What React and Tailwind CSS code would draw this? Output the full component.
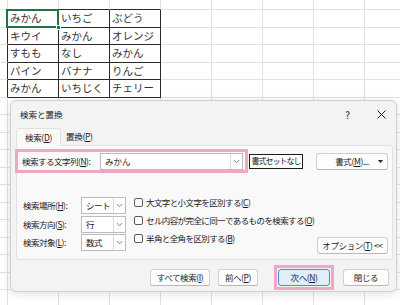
import React from "react";

const font = { fontFamily: '"Noto Sans CJK JP", "Noto Sans", sans-serif' };

const data = [
  ["みかん", "いちご", "ぶどう"],
  ["キウイ", "みかん", "オレンジ"],
  ["すもも", "なし", "みかん"],
  ["パイン", "バナナ", "りんご"],
  ["みかん", "いちじく", "チェリー"],
];

// background worksheet
function Sheet() {
  const cells = [];
  for (let r = 0; r < 18; r++) {
    for (let c = 0; c < 9; c++) {
      const inData = r >= 1 && r <= 5 && c >= 1 && c <= 3;
      const rightDark = r >= 1 && r <= 5 && c <= 3;
      const bottomDark = c >= 1 && c <= 3 && r <= 5;
      cells.push(
        <div
          key={r + "-" + c}
          className={`flex items-center border-r border-b px-[2px] text-[10.5px] text-[#333] ${
            rightDark ? "border-r-[#2a2a2a]" : "border-r-[#e1e1e1]"
          } ${bottomDark ? "border-b-[#2a2a2a]" : "border-b-[#e1e1e1]"}`}
        >
          {inData ? data[r - 1][c - 1] : ""}
        </div>
      );
    }
  }
  return (
    <div className="grid grid-cols-[8px_repeat(8,51px)] grid-rows-[10px_repeat(17,17.5px)]" style={font}>
      {cells}
    </div>
  );
}

function Btn({ children, className = "" }) {
  return (
    <div
      className={`flex h-[17px] items-center justify-center rounded-[3px] border border-[#d0d0d0] border-b-[#b8b8b8] bg-[#fdfdfd] text-[8.5px] tracking-[-0.4px] text-[#1a1a1a] ${className}`}
    >
      {children}
    </div>
  );
}

function Chevron() {
  return (
    <svg width="7" height="5" viewBox="0 0 7 5" fill="none">
      <path d="M0.8 1 L3.5 3.8 L6.2 1" stroke="#777" strokeWidth="0.9" />
    </svg>
  );
}

function Select({ value }) {
  return (
    <div className="flex h-[17px] w-[45px] items-stretch border border-[#bcbcbc] bg-white text-[8.5px] text-[#1a1a1a]">
      <div className="flex flex-1 items-center pl-[4px]">{value}</div>
      <div className="flex w-[12px] items-center justify-center border-l border-[#dcdcdc]">
        <Chevron />
      </div>
    </div>
  );
}

function Check({ children }) {
  return (
    <div className="flex h-[18px] items-center gap-[3px] text-[8.5px] tracking-[-0.6px] text-[#1a1a1a]">
      <div className="h-[9px] w-[9px] rounded-[2px] border border-[#5a5a5a] bg-white" />
      <span>{children}</span>
    </div>
  );
}

const U = ({ children }) => <span className="underline">{children}</span>;

function Dialog() {
  return (
    <div
      className="absolute left-[10px] top-[100px] flex h-[192px] w-[387px] flex-col whitespace-nowrap rounded-[6px] border border-[#cfcfcf] bg-[#f3f3f3] shadow-[0_2px_8px_rgba(0,0,0,0.12)]"
      style={font}
    >
      {/* title bar */}
      <div className="flex h-[26px] items-center pl-[9px] text-[8.5px] text-[#1a1a1a]">
        <span>検索と置換</span>
        <span className="ml-auto mr-[27px] text-[10px]">?</span>
        <svg width="9" height="9" viewBox="0 0 9 9" className="mr-[10px]">
          <path d="M0.5 0.5 L8.5 8.5 M8.5 0.5 L0.5 8.5" stroke="#222" strokeWidth="1" />
        </svg>
      </div>

      {/* tabs */}
      <div className="flex h-[18px] items-end pl-[5px] text-[8.5px] tracking-[-0.3px] text-[#1a1a1a]">
        <div className="relative z-10 -mb-px flex h-[18px] w-[45px] items-center justify-center rounded-t-[3px] border border-b-0 border-[#e0e0e0] bg-[#f9f9f9]">
          検索(<U>D</U>)
        </div>
        <div className="flex h-[17px] items-center pl-[5px]">
          置換(<U>P</U>)
        </div>
      </div>

      {/* tab panel */}
      <div className="ml-[5px] flex h-[115px] w-[377px] flex-col rounded-[3px] border border-[#e2e2e2] bg-[#f9f9f9]">
        <div className="mt-[3px] flex items-center">
          <div className="-ml-[2px] flex h-[24px] w-[233px] items-center border-[3px] border-[#f2a6c4] pl-[4px] text-[8.5px] text-[#1a1a1a]">
            <span className="w-[78px] tracking-[-0.5px]">
              検索する文字列(<U>N</U>):
            </span>
            <div className="flex h-[17px] w-[143px] items-stretch border border-[#bcbcbc] bg-white">
              <div className="flex flex-1 items-center pl-[4px]">みかん</div>
              <div className="flex w-[12px] items-center justify-center border-l border-[#dcdcdc]">
                <Chevron />
              </div>
            </div>
          </div>
          <div className="ml-[1px] flex h-[15px] w-[54px] items-center justify-center border border-[#1a1a1a] bg-[#fdfdfd] text-[8px] tracking-[-1px] text-[#1a1a1a]">
            書式セットなし
          </div>
          <Btn className="relative ml-[13px] w-[72px]">
            書式(<U>M</U>)...
            <svg width="5" height="3" viewBox="0 0 5 3" className="absolute right-[4px] top-[6px]">
              <path d="M0 0 L5 0 L2.5 3 Z" fill="#222" />
            </svg>
          </Btn>
        </div>

        <div className="mt-[24px] flex items-start">
          <div className="flex flex-col gap-[1.5px] pl-[6px] text-[8.5px] tracking-[-0.5px] text-[#1a1a1a]">
            {[
              ["検索場所", "H", "シート"],
              ["検索方向", "S", "行"],
              ["検索対象", "L", "数式"],
            ].map(([l, k, v]) => (
              <div key={k} className="flex items-center">
                <span className="w-[58px]">
                  {l}(<U>{k}</U>):
                </span>
                <Select value={v} />
              </div>
            ))}
          </div>
          <div className="-mt-[4px] ml-[8px] flex flex-col">
            <Check>
              大文字と小文字を区別する(<U>C</U>)
            </Check>
            <Check>
              セル内容が完全に同一であるものを検索する(<U>O</U>)
            </Check>
            <Check>
              半角と全角を区別する(<U>B</U>)
            </Check>
          </div>
          <Btn className="mr-[4px] ml-auto mt-[40px] h-[16px] w-[71px]">
            オプション(<U>T</U>) &lt;&lt;
          </Btn>
        </div>
      </div>

      {/* bottom buttons */}
      <div className="mt-[5px] flex items-center pl-[139px]">
        <Btn className="w-[60px]">
          すべて検索(<U>I</U>)
        </Btn>
        <Btn className="ml-[8px] w-[40px]">
          前へ(<U>P</U>)
        </Btn>
        <div className="ml-[16px] border-[3px] border-[#f2a6c4] p-[1px]">
          <div className="flex h-[17px] w-[52px] items-center justify-center rounded-[3px] border border-[#4a8fd6] bg-[#e1edf9] text-[8.5px] tracking-[-0.4px] text-[#1a1a1a]">
            次へ(<U>N</U>)
          </div>
        </div>
        <Btn className="ml-[9px] w-[46px]">閉じる</Btn>
      </div>
    </div>
  );
}

export default function App() {
  return (
    <div className="relative h-[305px] w-[400px] overflow-hidden bg-white">
      <Sheet />
      {/* active cell */}
      <div className="absolute left-[6px] top-[9px] h-[19px] w-[53px] border-2 border-[#217346]" />
      <div className="absolute left-[56px] top-[25px] h-[5px] w-[5px] border border-white bg-[#217346]" />
      <Dialog />
    </div>
  );
}
